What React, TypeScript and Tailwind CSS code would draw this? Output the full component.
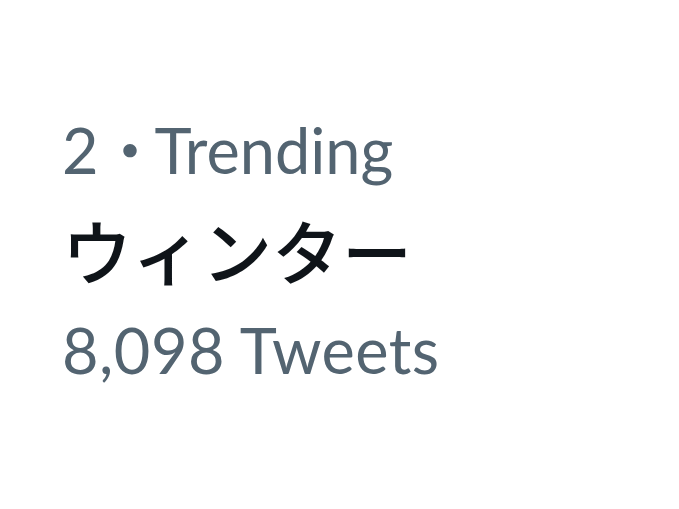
export default function App() {
  return (
    <div className="flex h-[509px] w-[679px] flex-col bg-white pl-[62px] pt-[100px] font-['Lato','Noto_Sans_CJK_JP',sans-serif]">
      <div className="text-[63px] leading-[100px] text-[#536471]">2<span className="tracking-[-7px]">・</span>Trending</div>
      <div className="font-['Noto_Sans_CJK_JP',sans-serif] text-[70px] font-medium leading-[100px] text-[#0f1419]">ウィンター</div>
      <div className="text-[63px] leading-[100px] tracking-[0.5px] text-[#536471]">8,098 Tweets</div>
    </div>
  );
}
